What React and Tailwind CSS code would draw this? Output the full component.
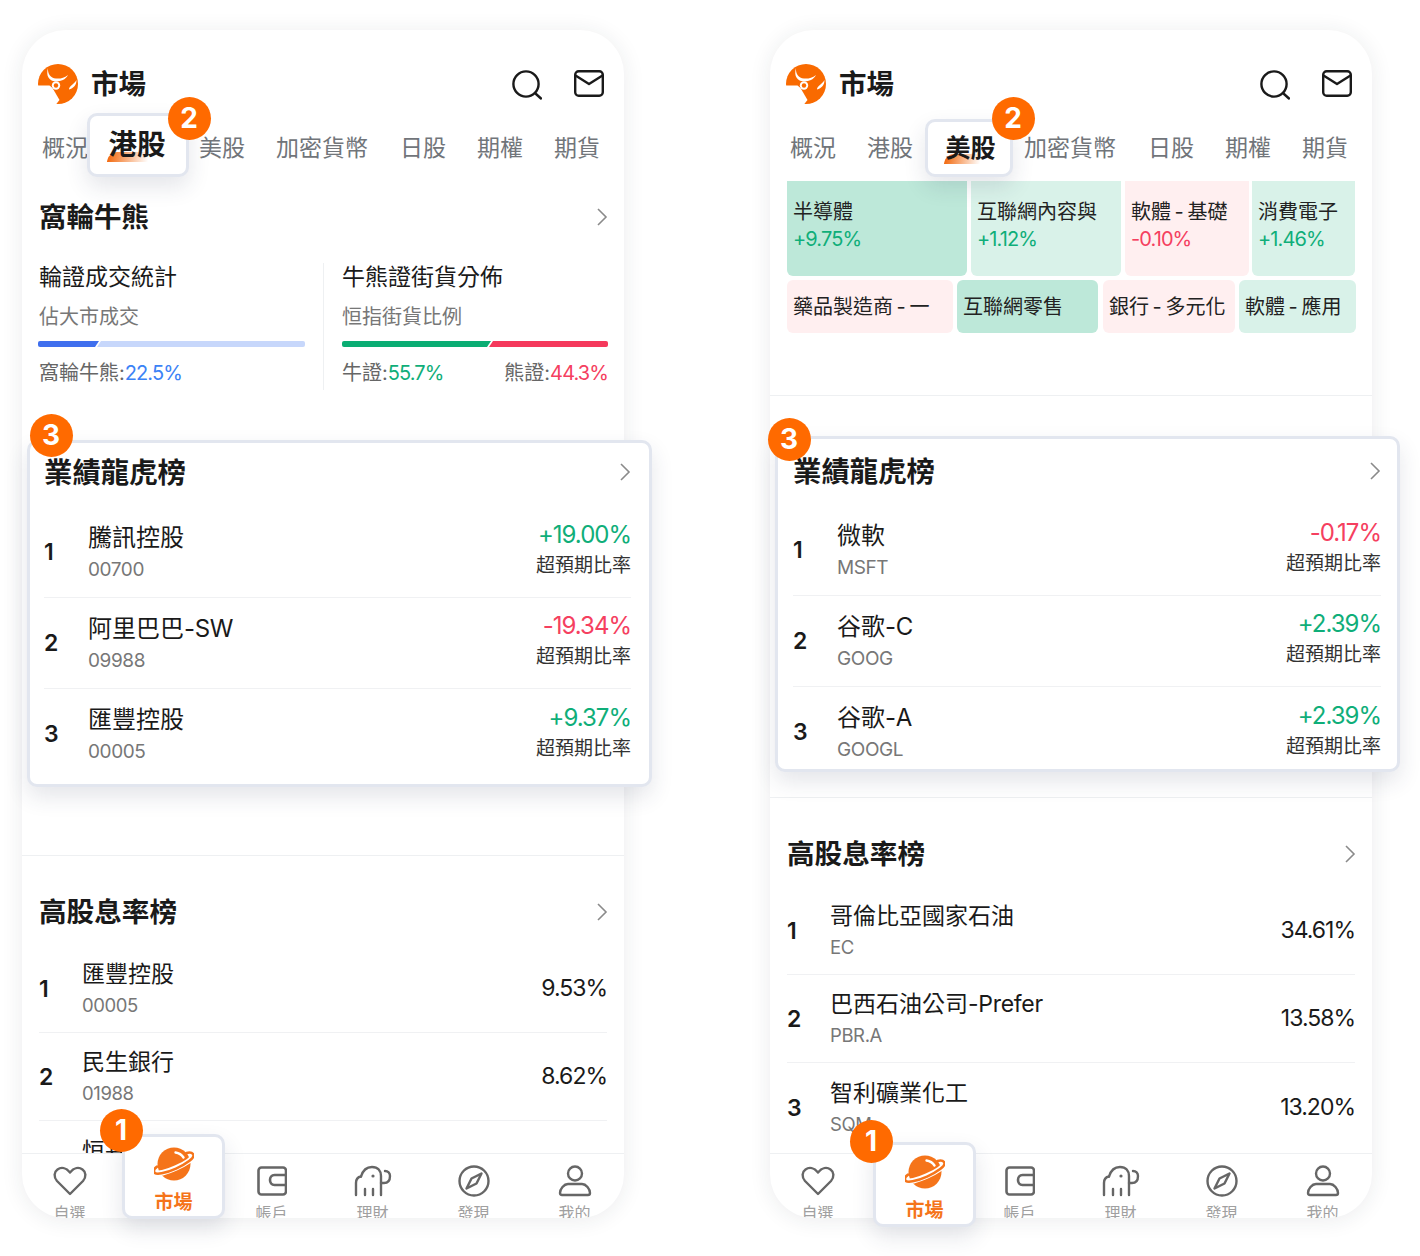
import React from "react";

const Logo = () => (
  <svg width="40" height="40" viewBox="0 0 40 40">
    <circle cx="20" cy="20" r="20" fill="#f96a00" />
    <path d="M-1 21.5H11.5L14.5 24L21.5 36L17.5 41H-1Z" fill="#fff" />
    <path d="M10 4C9.5 10 12.5 14 18 14.5C22 15 26 14 30 11C27 16.5 22 17.5 17 17.2C11.5 17 7.5 12 10 4Z" fill="#fff" />
    <circle cx="18" cy="21.5" r="4.2" fill="#fff" />
    <circle cx="18" cy="21.5" r="2.2" fill="#f96a00" />
    <path d="M38.5 16C38.5 21 35.5 24.5 31 25.5C31 22 35.5 21 38.5 16Z" fill="#fff" />
  </svg>
);
const Search = () => (
  <svg width="30" height="30" viewBox="0 0 30 30" fill="none" stroke="#1a1a1a" strokeWidth="2.4" strokeLinecap="round">
    <circle cx="14" cy="14" r="12.6" />
    <path d="M24 24L29 28.5" />
  </svg>
);
const Mail = () => (
  <svg width="30" height="27" viewBox="0 0 30 27" fill="none" stroke="#1a1a1a" strokeWidth="2.4" strokeLinejoin="round">
    <rect x="1.2" y="1.2" width="27.6" height="24.6" rx="3.5" />
    <path d="M1.5 5.5L15 14L28.5 5.5" />
  </svg>
);
const Chevron = () => (
  <svg width="12" height="20" viewBox="0 0 12 20" fill="none" stroke="#8a8a8a" strokeWidth="1.6">
    <path d="M2 2L10 10L2 18" />
  </svg>
);
const Heart = () => (
  <svg width="34" height="30" viewBox="0 0 34 30" fill="none" stroke="#666" strokeWidth="2.4" strokeLinejoin="round">
    <path d="M17 28L4 15C0.5 11 1 6 4.5 3.5C8 1 13 1.5 17 6.5C21 1.5 26 1 29.5 3.5C33 6 33.5 11 30 15Z" />
  </svg>
);
const Wallet = () => (
  <svg width="30" height="30" viewBox="0 0 30 30" fill="none" stroke="#666" strokeWidth="2.6" strokeLinejoin="round">
    <rect x="1.5" y="1.5" width="27.5" height="27" rx="3" />
    <path d="M29 9H17.5C14.5 9 13 11.5 13 14C13 16.5 14.5 19 17.5 19H29" />
  </svg>
);
const Elephant = () => (
  <svg width="38" height="32" viewBox="0 0 38 32" fill="none" stroke="#666" strokeWidth="2.4" strokeLinecap="round">
    <path d="M2 30V18C2 14 4 12 7 11.5" />
    <path d="M7 11.5C9 5 13 2 18 2C24 2 27 6 27 11V30" />
    <path d="M27 18H30C34 18 36 15 36 11C36 8 34 6 31 6" />
    <path d="M11 24V30M19 24V30" />
    <circle cx="19" cy="11" r="1.6" fill="#666" stroke="none" />
  </svg>
);
const Compass = () => (
  <svg width="32" height="32" viewBox="0 0 32 32" fill="none" stroke="#666" strokeWidth="2.4" strokeLinejoin="round">
    <circle cx="16" cy="16" r="14.5" />
    <path d="M23.5 8.5L18.5 18.5L8.5 23.5L13.5 13.5Z" />
  </svg>
);
const User = () => (
  <svg width="34" height="32" viewBox="0 0 34 32" fill="none" stroke="#666" strokeWidth="2.4" strokeLinejoin="round">
    <circle cx="17" cy="8.5" r="7" />
    <path d="M10 19H24C28 19 32 24 32 28C32 29.5 31 30 30 30H4C3 30 2 29.5 2 28C2 24 6 19 10 19Z" />
  </svg>
);
const Planet = () => (
  <svg width="40" height="34" viewBox="0 0 40 34" fill="none">
    <circle cx="20" cy="17" r="16.5" fill="#f5741a" />
    <g transform="rotate(-24 20 17)">
      <path d="M0 17C-1 23 41 23 40 17" stroke="#fff" strokeWidth="5.5" />
      <path d="M-1.5 16C-2.5 24 42.5 24 41.5 16C41.3 14 38.5 12.5 36 12" stroke="#f5741a" strokeWidth="2.6" strokeLinecap="round" />
      <path d="M3.5 12.5C1 13 -1.2 14 -1.5 16" stroke="#f5741a" strokeWidth="2.6" strokeLinecap="round" />
    </g>
    <path d="M21.5 5.5C24.5 6 27.5 7.5 29.5 10.5" stroke="#fff" strokeWidth="2.4" strokeLinecap="round" />
  </svg>
);

const Badge = ({ n, pos }) => (
  <span className={`absolute z-30 flex h-[43px] w-[43px] items-center justify-center rounded-full bg-[#ff6a00] text-[28px] font-bold leading-none text-white ${pos}`}>
    {n}
  </span>
);

const Name = ({ text }) =>
  text.split(/([A-Za-z.\-]+)/).map((part, i) =>
    i % 2 ? (
      <span key={i} className="tracking-[-0.3px]">{part}</span>
    ) : (
      part
    )
  );

const highlight = "border-[3px] border-[#e2e6ef] bg-white shadow-[0_10px_22px_rgba(40,50,80,0.12)]";

const Tabs = ({ items }) => (
  <div className="mt-[9px] flex h-[64px] items-end pl-[20px] text-[23px] text-[#71757a]">
    {items.map((t) =>
      t.active ? (
        <div key={t.label} className={`relative z-20 flex flex-none items-center justify-center rounded-[10px] ${highlight} ${t.box}`}>
          <span className={`relative font-semibold text-[#1a1a1a] ${t.size}`}>
            <span className="absolute bottom-0 left-0 h-[10px] w-[72%] -skew-x-12 rounded-tl-[8px] bg-gradient-to-r from-[#f26a10] to-transparent" />
            <span className="relative">{t.label}</span>
          </span>
          <Badge n="2" pos={t.badge} />
        </div>
      ) : (
        <div key={t.label} className={`flex h-[58px] flex-none items-center leading-none ${t.ml}`}>
          {t.label}
        </div>
      )
    )}
  </div>
);

const Header = () => (
  <div className="flex h-[74px] items-start pl-[16px] pr-[20px] pt-[34px]">
    <Logo />
    <div className="ml-[13px] flex h-[40px] items-center pt-[2px] text-[27.5px] font-semibold leading-none text-[#1a1a1a]">市場</div>
    <div className="ml-auto mt-[6px] flex items-start gap-[32px]">
      <Search />
      <Mail />
    </div>
  </div>
);

const CardRow = ({ rank, name, code, pct, color, last }) => (
  <div className={`flex h-[91px] flex-none items-center ${last ? "" : "border-b border-[#f0f1f3]"}`}>
    <div className="w-[44px] flex-none text-[23px] font-semibold leading-none text-[#1a1a1a]">{rank}</div>
    <div className="flex flex-col pt-[3px]">
      <div className="text-[24px] leading-[30px] text-[#1a1a1a]"><Name text={name} /></div>
      <div className="mt-[2px] text-[19px] leading-[30px] tracking-[-0.4px] text-[#777]">{code}</div>
    </div>
    <div className="ml-auto flex flex-col items-end pb-[3px]">
      <div className={`text-[24px] leading-[30px] tracking-[-1px] ${color}`}>{pct}</div>
      <div className="mt-[1px] text-[19px] leading-[30px] text-[#333]">超預期比率</div>
    </div>
  </div>
);

const green = "text-[#0fae79]";
const red = "text-[#f5405f]";

const HighlightCard = ({ rows, cls, badge, head, pad }) => (
  <div className={`relative z-10 ml-[5px] w-[625px] flex-none rounded-[10px] ${highlight} ${cls}`}>
    <Badge n="3" pos={badge} />
    <div className={`h-full overflow-hidden rounded-[8px] ${pad}`}>
      <div className={`flex items-center justify-between text-[28.4px] font-semibold leading-none text-[#1a1a1a] ${head}`}>
        <span className="pt-[2px]">業績龍虎榜</span>
        <span><Chevron /></span>
      </div>
      {rows.map((r, i) => (
        <CardRow key={r.rank} {...r} last={i === rows.length - 1} />
      ))}
    </div>
  </div>
);

const YieldSection = ({ rows, gap }) => (
  <div className="min-h-0 flex-1 overflow-hidden pl-[17px] pr-[17px]">
    <div className="mt-[36px] flex h-[40px] items-center justify-between text-[27.6px] font-semibold leading-none text-[#1a1a1a]">
      <span className="pt-[2px]">高股息率榜</span>
      <span className="mr-[-1px]"><Chevron /></span>
    </div>
    <div className={gap}>
      {rows.map((r, i) => (
        <div key={r.rank} className={`flex h-[88px] items-center ${i === rows.length - 1 ? "" : "border-b border-[#f0f1f3]"}`}>
          <div className="w-[43px] flex-none pt-[2px] text-[23px] font-semibold leading-none text-[#1a1a1a]">{r.rank}</div>
          <div className="flex flex-col pt-[2px]">
            <div className="text-[23px] leading-[30px] text-[#1a1a1a]"><Name text={r.name} /></div>
            <div className="mt-[1px] text-[18.5px] leading-[30px] tracking-[-0.4px] text-[#777]">{r.code}</div>
          </div>
          <div className="ml-auto text-[23px] leading-none tracking-[-1px] text-[#1a1a1a]">{r.val}</div>
        </div>
      ))}
    </div>
  </div>
);

const navItems = [
  { label: "自選", icon: <Heart /> },
  { label: "市場", icon: null },
  { label: "帳戶", icon: <Wallet /> },
  { label: "理財", icon: <Elephant /> },
  { label: "發現", icon: <Compass /> },
  { label: "我的", icon: <User /> },
];

const NavBar = () => (
  <div className="h-[65px] flex-none overflow-hidden rounded-b-[44px] border-t border-[#eef0f2]">
    <div className="ml-[-3px] flex">
      {navItems.map((n) => (
        <div key={n.label} className="flex w-[101px] flex-none flex-col items-center">
          <div className="flex h-[51px] items-center pt-[3px]">{n.icon}</div>
          <div className={`text-[16px] leading-[16px] text-[#a0a0a0] ${n.icon ? "" : "invisible"}`}>{n.label}</div>
        </div>
      ))}
    </div>
  </div>
);

const MarketBox = ({ cls, badge }) => (
  <div className={`absolute z-20 flex h-[85px] w-[103px] flex-col items-center rounded-[10px] pt-[10px] ${highlight} ${cls}`}>
    <Badge n="1" pos={badge} />
    <Planet />
    <div className="mt-[10px] text-[19px] font-semibold leading-[24px] text-[#f5741a]">市場</div>
  </div>
);

const Phone = ({ children, box, badge }) => (
  <div className="relative h-[1188px] w-[602px] flex-none rounded-[44px] bg-white shadow-[0_2px_22px_rgba(30,40,60,0.09)]">
    <div className="flex h-full flex-col">
      <div className="flex min-h-0 flex-1 flex-col">{children}</div>
      <NavBar />
    </div>
    <MarketBox cls={box} badge={badge} />
  </div>
);

const WarrantCol = ({ title, sub, bar, footer, cls, indent }) => (
  <div className={`flex flex-none flex-col ${cls}`}>
    <div className={`text-[23px] leading-[28px] text-[#1a1a1a] ${indent}`}>{title}</div>
    <div className={`mt-[13px] text-[20px] leading-[26px] text-[#777] ${indent}`}>{sub}</div>
    <div className="mt-[11px]">{bar}</div>
    <div className={`mt-[13px] flex justify-between text-[20px] leading-[26px] text-[#666] ${indent}`}>{footer}</div>
  </div>
);

const Num = ({ c, children }) => <span className={`tracking-[-0.9px] ${c}`}>{children}</span>;

const SplitBar = ({ left, right, w }) => (
  <div className="flex h-[6px] w-full overflow-hidden rounded-[2px]">
    <div className={`h-full flex-none [clip-path:polygon(0_0,100%_0,calc(100%-4px)_100%,0_100%)] ${left} ${w}`} />
    <div className={`ml-[-2px] h-full flex-1 [clip-path:polygon(4px_0,100%_0,100%_100%,0_100%)] ${right}`} />
  </div>
);

const HeatCell = ({ w, name, pct, bg, color, tall }) => (
  <div className={`flex-none px-[6px] ${w} ${bg} ${tall ? "h-[95px] rounded-b-[6px] pt-[18px]" : "flex h-[53px] items-center rounded-[6px]"}`}>
    <div className="whitespace-nowrap text-[20px] leading-[26px] text-[#222] [word-spacing:-2px]">{name}</div>
    {pct && <div className={`mt-[1px] text-[20px] leading-[26px] tracking-[-0.9px] ${color}`}>{pct}</div>}
  </div>
);

const strong = "bg-[#bde8d9]";
const light = "bg-[#d9f2e9]";
const pink = "bg-[#ffeff0]";

export default function App() {
  return (
    <div className="flex h-[1256px] w-[1420px] gap-[146px] overflow-hidden bg-white pl-[22px] pt-[30px] [font-family:Inter,'Noto_Sans_CJK_TC',sans-serif]">
      <Phone box="left-[100px] top-[1104px]" badge="left-[-25.5px] top-[-28.5px]">
        <Header />
        <Tabs
          items={[
            { label: "概況" },
            { label: "港股", active: true, box: "ml-[-1px] h-[64px] w-[102px] pr-[2px]", size: "text-[28.5px] leading-[34px]", badge: "right-[-24.5px] top-[-19.5px]" },
            { label: "美股", ml: "ml-[10px]" },
            { label: "加密貨幣", ml: "ml-[31px]" },
            { label: "日股", ml: "ml-[32px]" },
            { label: "期權", ml: "ml-[31px]" },
            { label: "期貨", ml: "ml-[31px]" },
          ]}
        />
        <div className="mt-[20px] flex h-[40px] items-center justify-between pl-[17px] pr-[16px] text-[27.5px] font-semibold leading-none text-[#1a1a1a]">
          <span className="pt-[2px]">窩輪牛熊</span>
          <span><Chevron /></span>
        </div>
        <div className="mt-[26px] flex h-[127px] flex-none pl-[16px]">
          <WarrantCol
            title="輪證成交統計"
            sub="佔大市成交"
            cls="w-[267px]"
            indent="pl-[1px]"
            bar={<SplitBar left="bg-[#3f6fee]" right="bg-[#c7d7fb]" w="w-[61px]" />}
            footer={<span>窩輪牛熊:<Num c="text-[#3b82f6]">22.5%</Num></span>}
          />
          <div className="ml-[18px] mr-[18px] w-px flex-none bg-[#eef0f2]" />
          <WarrantCol
            title="牛熊證街貨分佈"
            sub="恒指街貨比例"
            cls="w-[266px]"
            indent=""
            bar={<SplitBar left="bg-[#0aad73]" right="bg-[#f5395c]" w="w-[149px]" />}
            footer={
              <>
                <span>牛證:<Num c={green}>55.7%</Num></span>
                <span>熊證:<Num c={red}>44.3%</Num></span>
              </>
            }
          />
        </div>
        <div className="mt-[50px]">
          <HighlightCard
            cls="h-[347px]"
            head="h-[58px] mb-[6px]"
            pad="pl-[14px] pr-[18px]"
            badge="left-[-0.5px] top-[-29.5px]"
            rows={[
              { rank: "1", name: "騰訊控股", code: "00700", pct: "+19.00%", color: green },
              { rank: "2", name: "阿里巴巴-SW", code: "09988", pct: "-19.34%", color: red },
              { rank: "3", name: "匯豐控股", code: "00005", pct: "+9.37%", color: green },
            ]}
          />
        </div>
        <div className="mt-[68px] flex-none border-t border-[#eef0f2]" />
        <YieldSection
          gap="mt-[13px]"
          rows={[
            { rank: "1", name: "匯豐控股", code: "00005", val: "9.53%" },
            { rank: "2", name: "民生銀行", code: "01988", val: "8.62%" },
            { rank: "3", name: "恒基地產", code: "00012", val: "8.10%" },
          ]}
        />
      </Phone>

      <Phone box="left-[103px] top-[1112px]" badge="left-[-26.5px] top-[-25.5px]">
        <Header />
        <Tabs
          items={[
            { label: "概況" },
            { label: "港股", ml: "ml-[31px]" },
            { label: "美股", active: true, box: "ml-[12px] h-[58px] w-[88px] pl-[3px]", size: "text-[25px] leading-[32px]", badge: "right-[-24.5px] top-[-25.5px]" },
            { label: "加密貨幣", ml: "ml-[11px]" },
            { label: "日股", ml: "ml-[32px]" },
            { label: "期權", ml: "ml-[31px]" },
            { label: "期貨", ml: "ml-[31px]" },
          ]}
        />
        <div className="mt-[4px] flex flex-none gap-[4px] pl-[17px]">
          <HeatCell tall w="w-[180px]" bg={strong} name="半導體" pct="+9.75%" color={green} />
          <HeatCell tall w="w-[150px]" bg={light} name="互聯網內容與" pct="+1.12%" color={green} />
          <HeatCell tall w="w-[124px]" bg={pink} name="軟體 - 基礎" pct="-0.10%" color={red} />
          <HeatCell tall w="w-[103px] ml-[-1px]" bg={light} name="消費電子" pct="+1.46%" color={green} />
        </div>
        <div className="mt-[4px] flex flex-none gap-[4px] pl-[17px]">
          <HeatCell w="w-[166px]" bg={pink} name="藥品製造商 - 一" />
          <HeatCell w="w-[141px]" bg={strong} name="互聯網零售" />
          <HeatCell w="w-[132px] ml-[1px]" bg={pink} name="銀行 - 多元化" />
          <HeatCell w="w-[117px]" bg={light} name="軟體 - 應用" />
        </div>
        <div className="mt-[62px] flex-none border-t border-[#eef0f2]" />
        <div className="mt-[40px]">
          <HighlightCard
            cls="h-[336px]"
            head="h-[64px] mb-[2px]"
            pad="pl-[15px] pr-[16px]"
            badge="left-[-10.5px] top-[-21.5px]"
            rows={[
              { rank: "1", name: "微軟", code: "MSFT", pct: "-0.17%", color: red },
              { rank: "2", name: "谷歌-C", code: "GOOG", pct: "+2.39%", color: green },
              { rank: "3", name: "谷歌-A", code: "GOOGL", pct: "+2.39%", color: green },
            ]}
          />
        </div>
        <div className="mt-[25px] flex-none border-t border-[#eef0f2]" />
        <YieldSection
          gap="mt-[13px]"
          rows={[
            { rank: "1", name: "哥倫比亞國家石油", code: "EC", val: "34.61%" },
            { rank: "2", name: "巴西石油公司-Prefer", code: "PBR.A", val: "13.58%" },
            { rank: "3", name: "智利礦業化工", code: "SQM", val: "13.20%" },
          ]}
        />
      </Phone>
    </div>
  );
}
